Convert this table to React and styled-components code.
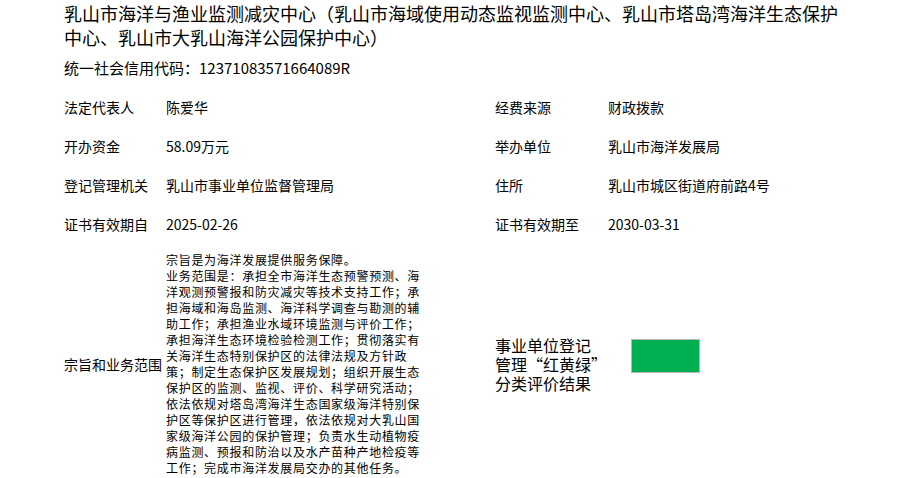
import React from 'react';
import styled, { createGlobalStyle } from 'styled-components';

const Global = createGlobalStyle`
  html, body { margin: 0; padding: 0; background: #fff; }
  body {
    font-family: "Noto Sans CJK SC", "Microsoft YaHei", sans-serif;
    color: #000;
  }
`;

const Page = styled.div`
  box-sizing: border-box;
  width: 902px;
  padding: 1px 0 0 64px;
`;

const Title = styled.h1`
  margin: 0;
  width: 780px;
  font-size: 18px;
  line-height: 24px;
  font-weight: normal;
`;

const Code = styled.div`
  margin-top: 8px;
  font-size: 15px;
  line-height: 22px;
`;

const Grid = styled.div`
  margin-top: 8px;
  display: grid;
  grid-template-columns: 102px 329px 113px 1fr;
  grid-template-rows: repeat(4, 39px) auto;
`;

const Cell = styled.div`
  display: flex;
  align-items: center;
  font-size: 14px;
  white-space: nowrap;
`;

const TallCell = styled.div`
  display: flex;
  align-items: center;
  padding: ${p => (p.$pad ? '9px 0' : '0')};
  font-size: 14px;
`;

const Scope = styled.p`
  margin: 0;
  width: 256px;
  font-size: 12px;
  line-height: 16px;
  letter-spacing: 0.7px;
`;

const RatingLabel = styled.div`
  font-size: 16px;
  line-height: 19px;
  white-space: nowrap;
`;

const Quote = styled.span`
  font-feature-settings: "fwid";
`;

const Badge = styled.div`
  width: 67px;
  height: 32px;
  margin: 0 0 16px 23px;
  background: #00b050;
  border: 1px solid #b8b8b8;
`;

const rows = [
  ['法定代表人', '陈爱华', '经费来源', '财政拨款'],
  ['开办资金', '58.09万元', '举办单位', '乳山市海洋发展局'],
  ['登记管理机关', '乳山市事业单位监督管理局', '住所', '乳山市城区街道府前路4号'],
  ['证书有效期自', '2025-02-26', '证书有效期至', '2030-03-31'],
];

export default function App() {
  return (
    <Page lang="zh-CN">
      <Global />
      <Title>
        乳山市海洋与渔业监测减灾中心（乳山市海域使用动态监视监测中心、乳山市塔岛湾海洋生态保护中心、乳山市大乳山海洋公园保护中心）
      </Title>
      <Code>统一社会信用代码：12371083571664089R</Code>
      <Grid>
        {rows.map((r, i) => (
          <React.Fragment key={i}>
            {r.map((t, j) => (
              <Cell key={j}>{t}</Cell>
            ))}
          </React.Fragment>
        ))}
        <TallCell>宗旨和业务范围</TallCell>
        <TallCell $pad>
          <Scope>
            宗旨是为海洋发展提供服务保障。
            <br />
            业务范围是：承担全市海洋生态预警预测、海洋观测预警报和防灾减灾等技术支持工作；承担海域和海岛监测、海洋科学调查与勘测的辅助工作；承担渔业水域环境监测与评价工作；承担海洋生态环境检验检测工作；贯彻落实有关海洋生态特别保护区的法律法规及方针政策；制定生态保护区发展规划；组织开展生态保护区的监测、监视、评价、科学研究活动；依法依规对塔岛湾海洋生态国家级海洋特别保护区等保护区进行管理，依法依规对大乳山国家级海洋公园的保护管理；负责水生动植物疫病监测、预报和防治以及水产苗种产地检疫等工作；完成市海洋发展局交办的其他任务。
          </Scope>
        </TallCell>
        <TallCell>
          <RatingLabel>
            事业单位登记
            <br />
            管理<Quote>“</Quote>红黄绿<Quote>”</Quote>
            <br />
            分类评价结果
          </RatingLabel>
        </TallCell>
        <TallCell>
          <Badge />
        </TallCell>
      </Grid>
    </Page>
  );
}
